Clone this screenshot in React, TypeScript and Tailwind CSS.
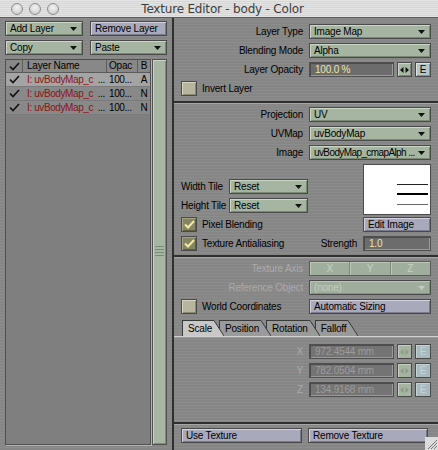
import React from "react";

const brushed =
  "bg-[repeating-linear-gradient(180deg,#8c8c8c_0px,#8c8c8c_1px,#868686_1px,#868686_3px)]";

function DownArrow({ color = "#111" }: { color?: string }) {
  return (
    <svg width="7" height="4" viewBox="0 0 7 4" className="shrink-0">
      <path d="M0 0H7L3.5 4Z" fill={color} />
    </svg>
  );
}

function Dropdown({
  text,
  className = "",
  textClass = "",
  disabled = false,
}: {
  text: string;
  className?: string;
  textClass?: string;
  disabled?: boolean;
}) {
  return (
    <div
      className={`flex h-[15px] items-center justify-between border border-[#4a4a4a] pl-[4px] pr-[5px] ${
        disabled
          ? "bg-[#9fae9c] text-[#c4ccc0] shadow-[inset_1px_1px_0_#b8c4b4,inset_-1px_-1px_0_#86927f]"
          : "bg-[#a5b5a2] text-black shadow-[inset_1px_1px_0_#cad6c6,inset_-1px_-1px_0_#7a8876]"
      } ${className}`}
    >
      <span className={`whitespace-pre ${textClass}`}>{text}</span>
      <DownArrow color={disabled ? "#c4ccc0" : "#111"} />
    </div>
  );
}

function PButton({
  text,
  className = "",
}: {
  text: string;
  className?: string;
}) {
  return (
    <div
      className={`flex h-[15px] items-center border border-[#4a4a4a] bg-[#a9a9bc] pl-[4px] text-black shadow-[inset_1px_1px_0_#d2d2e0,inset_-1px_-1px_0_#7a7a8c] ${className}`}
    >
      {text}
    </div>
  );
}

function Input({
  text,
  disabled = false,
  className = "",
}: {
  text: string;
  disabled?: boolean;
  className?: string;
}) {
  return (
    <div
      className={`flex h-[15px] items-center border border-[#505050] pl-[5px] shadow-[inset_1px_1px_0_#4c4c4c,inset_-1px_-1px_0_#9a9a9a] ${
        disabled ? "bg-[#747474] text-[#9c9c9c]" : "bg-[#6c6c6c] text-[#eee6a4]"
      } ${className}`}
    >
      {text}
    </div>
  );
}

function ArrowsBtn({ disabled = false }: { disabled?: boolean }) {
  const c = disabled ? "#8e9a8a" : "#111";
  return (
    <div
      className={`flex h-[15px] w-[15px] items-center justify-center border border-[#4a4a4a] ${
        disabled
          ? "bg-[#a6b4a2] shadow-[inset_1px_1px_0_#c4d0c0]"
          : "bg-[#a8b8a4] shadow-[inset_1px_1px_0_#cad6c6,inset_-1px_-1px_0_#7a8876]"
      }`}
    >
      <svg width="9" height="6" viewBox="0 0 9 6">
        <path d="M3.5 0V6L0 3Z" fill={c} />
        <path d="M5.5 0V6L9 3Z" fill={c} />
      </svg>
    </div>
  );
}

function EBtn({ disabled = false }: { disabled?: boolean }) {
  return (
    <div
      className={`flex h-[15px] w-[16px] items-center justify-center border border-[#4a4a4a] ${
        disabled
          ? "bg-[#a8babd] text-[#c8d4d6] shadow-[inset_1px_1px_0_#c4d2d4]"
          : "bg-[#b4c7cb] text-black shadow-[inset_1px_1px_0_#d8e4e6,inset_-1px_-1px_0_#84969a]"
      }`}
    >
      E
    </div>
  );
}

function Check({ color = "#f2eaa6", w = 2 }: { color?: string; w?: number }) {
  return (
    <svg width="11" height="9" viewBox="0 0 11 9">
      <path d="M1 4.5L4 7.5L10 1" stroke={color} strokeWidth={w} fill="none" />
    </svg>
  );
}

function CheckBox({ checked = false }: { checked?: boolean }) {
  return (
    <div
      className={`flex h-[15px] w-[16px] shrink-0 items-center justify-center border border-[#4a4a4a] ${
        checked
          ? "bg-[#858463] shadow-[inset_1px_1px_0_#a4a280,inset_-1px_-1px_0_#5e5d44]"
          : "bg-[#b7b59d] shadow-[inset_1px_1px_0_#d8d6c0,inset_-1px_-1px_0_#8a8870]"
      }`}
    >
      {checked && <Check />}
    </div>
  );
}

function Row({
  label,
  disabled = false,
  children,
}: {
  label: string;
  disabled?: boolean;
  children: React.ReactNode;
}) {
  return (
    <div className="flex h-[15px] items-center">
      <div
        className={`w-[135px] pr-[6px] text-right ${
          disabled ? "text-[#aaaaaa]" : "text-black"
        }`}
      >
        {label}
      </div>
      <div className="flex w-[122px] items-center">{children}</div>
    </div>
  );
}

function Tab({
  label,
  active = false,
  z,
}: {
  label: string;
  active?: boolean;
  z: string;
}) {
  const fill = active ? "#c8c8c8" : "#9a9a9a";
  return (
    <div className={`relative ${z} -mr-[5px] flex h-[16px]`}>
      <div
        className={`flex items-center border-l border-t border-[#3a3a3a] pl-[5px] pr-[1px] text-black ${
          active ? "bg-[#c8c8c8]" : "bg-[#9a9a9a]"
        }`}
      >
        {label}
      </div>
      <svg width="11" height="16" viewBox="0 0 11 16" className="shrink-0">
        <path d="M0 0.5H1L11 16H0Z" fill={fill} />
        <path d="M0 0.5H1L11 16" stroke="#3a3a3a" fill="none" />
      </svg>
    </div>
  );
}

function Section({
  children,
  className = "",
}: {
  children: React.ReactNode;
  className?: string;
}) {
  return (
    <div
      className={`border-t-2 border-[#2f2f2f] shadow-[inset_0_1px_0_#a6a6a6] ${className}`}
    >
      {children}
    </div>
  );
}

const layers = [
  { b: "A", sel: true },
  { b: "N", sel: false },
  { b: "N", sel: false },
];

export default function App() {
  return (
    <div className="relative h-[450px] w-[438px] overflow-hidden bg-[#878787] font-['Liberation_Sans',Arial,sans-serif] text-[10px] leading-none tracking-[-0.2px] text-black">
      {/* Title bar */}
      <div className="relative flex h-[18px] items-center border-b border-[#5a5a5a] bg-[repeating-linear-gradient(180deg,#e4e4e4_0px,#e4e4e4_1px,#d6d6d6_1px,#d6d6d6_2px)]">
        <div className="flex items-center gap-[6px] pl-[11px]">
          {[0, 1, 2].map((i) => (
            <div
              key={i}
              className="h-[12px] w-[12px] rounded-full border border-[#8e8e8e] bg-[radial-gradient(circle_at_50%_35%,#f4f4f4,#c4c4c4)]"
            />
          ))}
        </div>
        <div className="flex-1 pr-[52px] text-center font-['DejaVu_Sans',sans-serif] text-[12px] tracking-[-0.2px] text-[#404040]">
          Texture Editor - body - Color
        </div>
      </div>

      <div className="flex h-[432px]">
        {/* Left column */}
        <div className={`flex w-[172px] flex-col px-[5px] pb-[5px] pt-[3px] ${brushed}`}>
          <div className="flex gap-[7px]">
            <Dropdown text="Add Layer" className="h-[14px] w-[78px]" />
            <PButton text="Remove Layer" className="h-[14px] w-[77px]" />
          </div>
          <div className="mt-[4px] flex gap-[7px]">
            <Dropdown text="Copy" className="h-[14px] w-[78px]" />
            <Dropdown text="Paste" className="h-[14px] w-[77px]" />
          </div>
          <div className="mt-[4px] flex flex-1 gap-[1px]">
            {/* list */}
            <div className="flex w-[147px] flex-col border border-[#505050] bg-[#7f7f7f] shadow-[1px_1px_0_#b4b4b4]">
              <div className="flex h-[13px] items-center border-b border-[#5a5a5a] bg-[#888888]">
                <div className="flex h-full w-[17px] items-center justify-center border-r border-[#5e5e5e]">
                  <Check color="#111" w={1.6} />
                </div>
                <div className="flex h-full w-[84px] items-center border-r border-[#5e5e5e] pl-[4px]">
                  Layer Name
                </div>
                <div className="flex h-full w-[31px] items-center border-r border-[#5e5e5e] pl-[2px]">
                  Opac
                </div>
                <div className="flex h-full flex-1 items-center justify-center">B</div>
              </div>
              {layers.map((l, i) => (
                <div
                  key={i}
                  className={`flex h-[14px] items-center whitespace-nowrap border-b border-[#7a7a7a] ${
                    l.sel ? "bg-[#a4a4a4]" : "bg-[#898989]"
                  }`}
                >
                  <div className="flex w-[17px] justify-center">
                    <Check color="#111" w={1.6} />
                  </div>
                  <div className="flex w-[84px] items-center justify-between pl-[4px] pr-[2px] tracking-[-0.4px]">
                    <span className="text-[#8c1414]">I: uvBodyMap_c</span>
                    <span>...</span>
                  </div>
                  <div className="w-[31px] pl-[2px] tracking-[-0.4px]">100...</div>
                  <div className="flex-1 text-center">{l.b}</div>
                </div>
              ))}
            </div>
            {/* scrollbar */}
            <div className="flex w-[15px] flex-col border border-[#505050] bg-[#a6b6a3] shadow-[inset_1px_1px_0_#c8d4c4,inset_-1px_-1px_0_#7c8a78]">
              <div className="h-[186px]" />
              <div className="mx-[2px] flex flex-col gap-[2px]">
                <div className="h-[1px] bg-[#7a8a78]" />
                <div className="h-[1px] bg-[#7a8a78]" />
                <div className="h-[1px] bg-[#7a8a78]" />
                <div className="h-[1px] bg-[#7a8a78]" />
              </div>
            </div>
          </div>
        </div>

        {/* Right panel */}
        <div className={`flex flex-1 flex-col border-l-2 border-[#2f2f2f] ${brushed}`}>
          {/* Section 1 */}
          <div className="flex h-[83px] flex-col gap-[4px] pt-[6px]">
            <Row label="Layer Type">
              <Dropdown text="Image Map" className="w-full" />
            </Row>
            <Row label="Blending Mode">
              <Dropdown text="Alpha" className="w-full" />
            </Row>
            <Row label="Layer Opacity">
              <Input text="100.0 %" className="w-[85px]" />
              <div className="ml-[3px]">
                <ArrowsBtn />
              </div>
              <div className="ml-[3px]">
                <EBtn />
              </div>
            </Row>
            <div className="flex h-[15px] items-center gap-[5px] pl-[7px]">
              <CheckBox />
              <span>Invert Layer</span>
            </div>
          </div>

          {/* Section 2 */}
          <Section className="flex h-[154px] flex-col pt-[4px]">
            <div className="flex flex-col gap-[4px]">
              <Row label="Projection">
                <Dropdown text="UV" className="w-full" />
              </Row>
              <Row label="UVMap">
                <Dropdown text="uvBodyMap" className="w-full" />
              </Row>
              <Row label="Image">
                <Dropdown
                  text="uvBodyMap_cmapAlph ..."
                  className="w-full pr-[4px]"
                  textClass="tracking-[-0.6px]"
                />
              </Row>
            </div>
            <div className="mt-[4px] flex h-[51px] pl-[7px]">
              <div className="flex flex-1 flex-col justify-end gap-[4px] pb-[2px]">
                <div className="flex h-[15px] items-center">
                  <span className="w-[48px]">Width Tile</span>
                  <Dropdown text="Reset" className="w-[79px]" />
                </div>
                <div className="flex h-[15px] items-center">
                  <span className="w-[48px]">Height Tile</span>
                  <Dropdown text="Reset" className="w-[79px]" />
                </div>
              </div>
              <div className="mr-[7px] w-[68px] border border-[#4a4a4a] bg-white">
                <svg width="66" height="49" viewBox="0 0 66 49">
                  <path d="M33 19.5H64" stroke="#222" strokeWidth="1" />
                  <path d="M33 29H64" stroke="#000" strokeWidth="2" />
                  <path d="M33 39.5H64" stroke="#666" strokeWidth="1" />
                </svg>
              </div>
            </div>
            <div className="mt-[2px] flex h-[15px] items-center pl-[7px]">
              <CheckBox checked />
              <span className="ml-[5px] flex-1">Pixel Blending</span>
              <PButton text="Edit Image" className="mr-[7px] w-[68px]" />
            </div>
            <div className="mt-[4px] flex h-[15px] items-center pl-[7px]">
              <CheckBox checked />
              <span className="ml-[5px] flex-1">Texture Antialiasing</span>
              <span className="mr-[6px]">Strength</span>
              <Input text="1.0" className="mr-[7px] w-[68px]" />
            </div>
          </Section>

          {/* Section 3 */}
          <Section className="flex h-[167px] flex-col pt-[4px]">
            <div className="flex flex-col gap-[4px]">
              <Row label="Texture Axis" disabled>
                <div className="flex h-[15px] w-full border border-[#5a5a5a] bg-[#a0ae9d] text-[#c8d0c4]">
                  <div className="flex flex-1 items-center justify-center border-r border-[#7e8a7b] shadow-[inset_1px_1px_0_#bcc8b8]">X</div>
                  <div className="flex flex-1 items-center justify-center border-r border-[#7e8a7b] shadow-[inset_1px_1px_0_#bcc8b8]">Y</div>
                  <div className="flex flex-1 items-center justify-center shadow-[inset_1px_1px_0_#bcc8b8]">Z</div>
                </div>
              </Row>
              <Row label="Reference Object" disabled>
                <Dropdown text="(none)" className="w-full" disabled />
              </Row>
              <div className="flex h-[15px] items-center pl-[7px]">
                <CheckBox />
                <span className="ml-[5px] flex-1">World Coordinates</span>
                <PButton text="Automatic Sizing" className="mr-[7px] w-[122px]" />
              </div>
            </div>
            <div className="mt-[6px] flex h-[16px] items-end pl-[8px]">
              <Tab label="Scale" active z="z-40" />
              <Tab label="Position" z="z-30" />
              <Tab label="Rotation" z="z-20" />
              <Tab label="Falloff" z="z-10" />
            </div>
            <div className="h-[2px] border-t border-[#cfcfcf] bg-[#9a9a9a]" />
            <div className="mt-[6px] flex flex-col gap-[4px]">
              {[
                ["X", "972.4544 mm"],
                ["Y", "782.0504 mm"],
                ["Z", "134.9168 mm"],
              ].map(([k, v]) => (
                <Row key={k} label={k} disabled>
                  <Input text={v} disabled className="w-[85px]" />
                  <div className="ml-[3px]">
                    <ArrowsBtn disabled />
                  </div>
                  <div className="ml-[3px]">
                    <EBtn disabled />
                  </div>
                </Row>
              ))}
            </div>
          </Section>

          {/* Section 4 */}
          <Section className="flex flex-1 items-start gap-[6px] pl-[7px] pt-[4px]">
            <PButton text="Use Texture" className="w-[121px]" />
            <PButton text="Remove Texture" className="w-[120px]" />
          </Section>
        </div>
      </div>

      {/* resize grip */}
      <div className="absolute bottom-0 right-0 h-[13px] w-[13px] bg-[#dcdcdc]">
        <svg width="13" height="13" viewBox="0 0 13 13">
          <path d="M3 12L12 3M6 12L12 6M9 12L12 9" stroke="#7a7a7a" strokeWidth="1" />
        </svg>
      </div>
    </div>
  );
}
